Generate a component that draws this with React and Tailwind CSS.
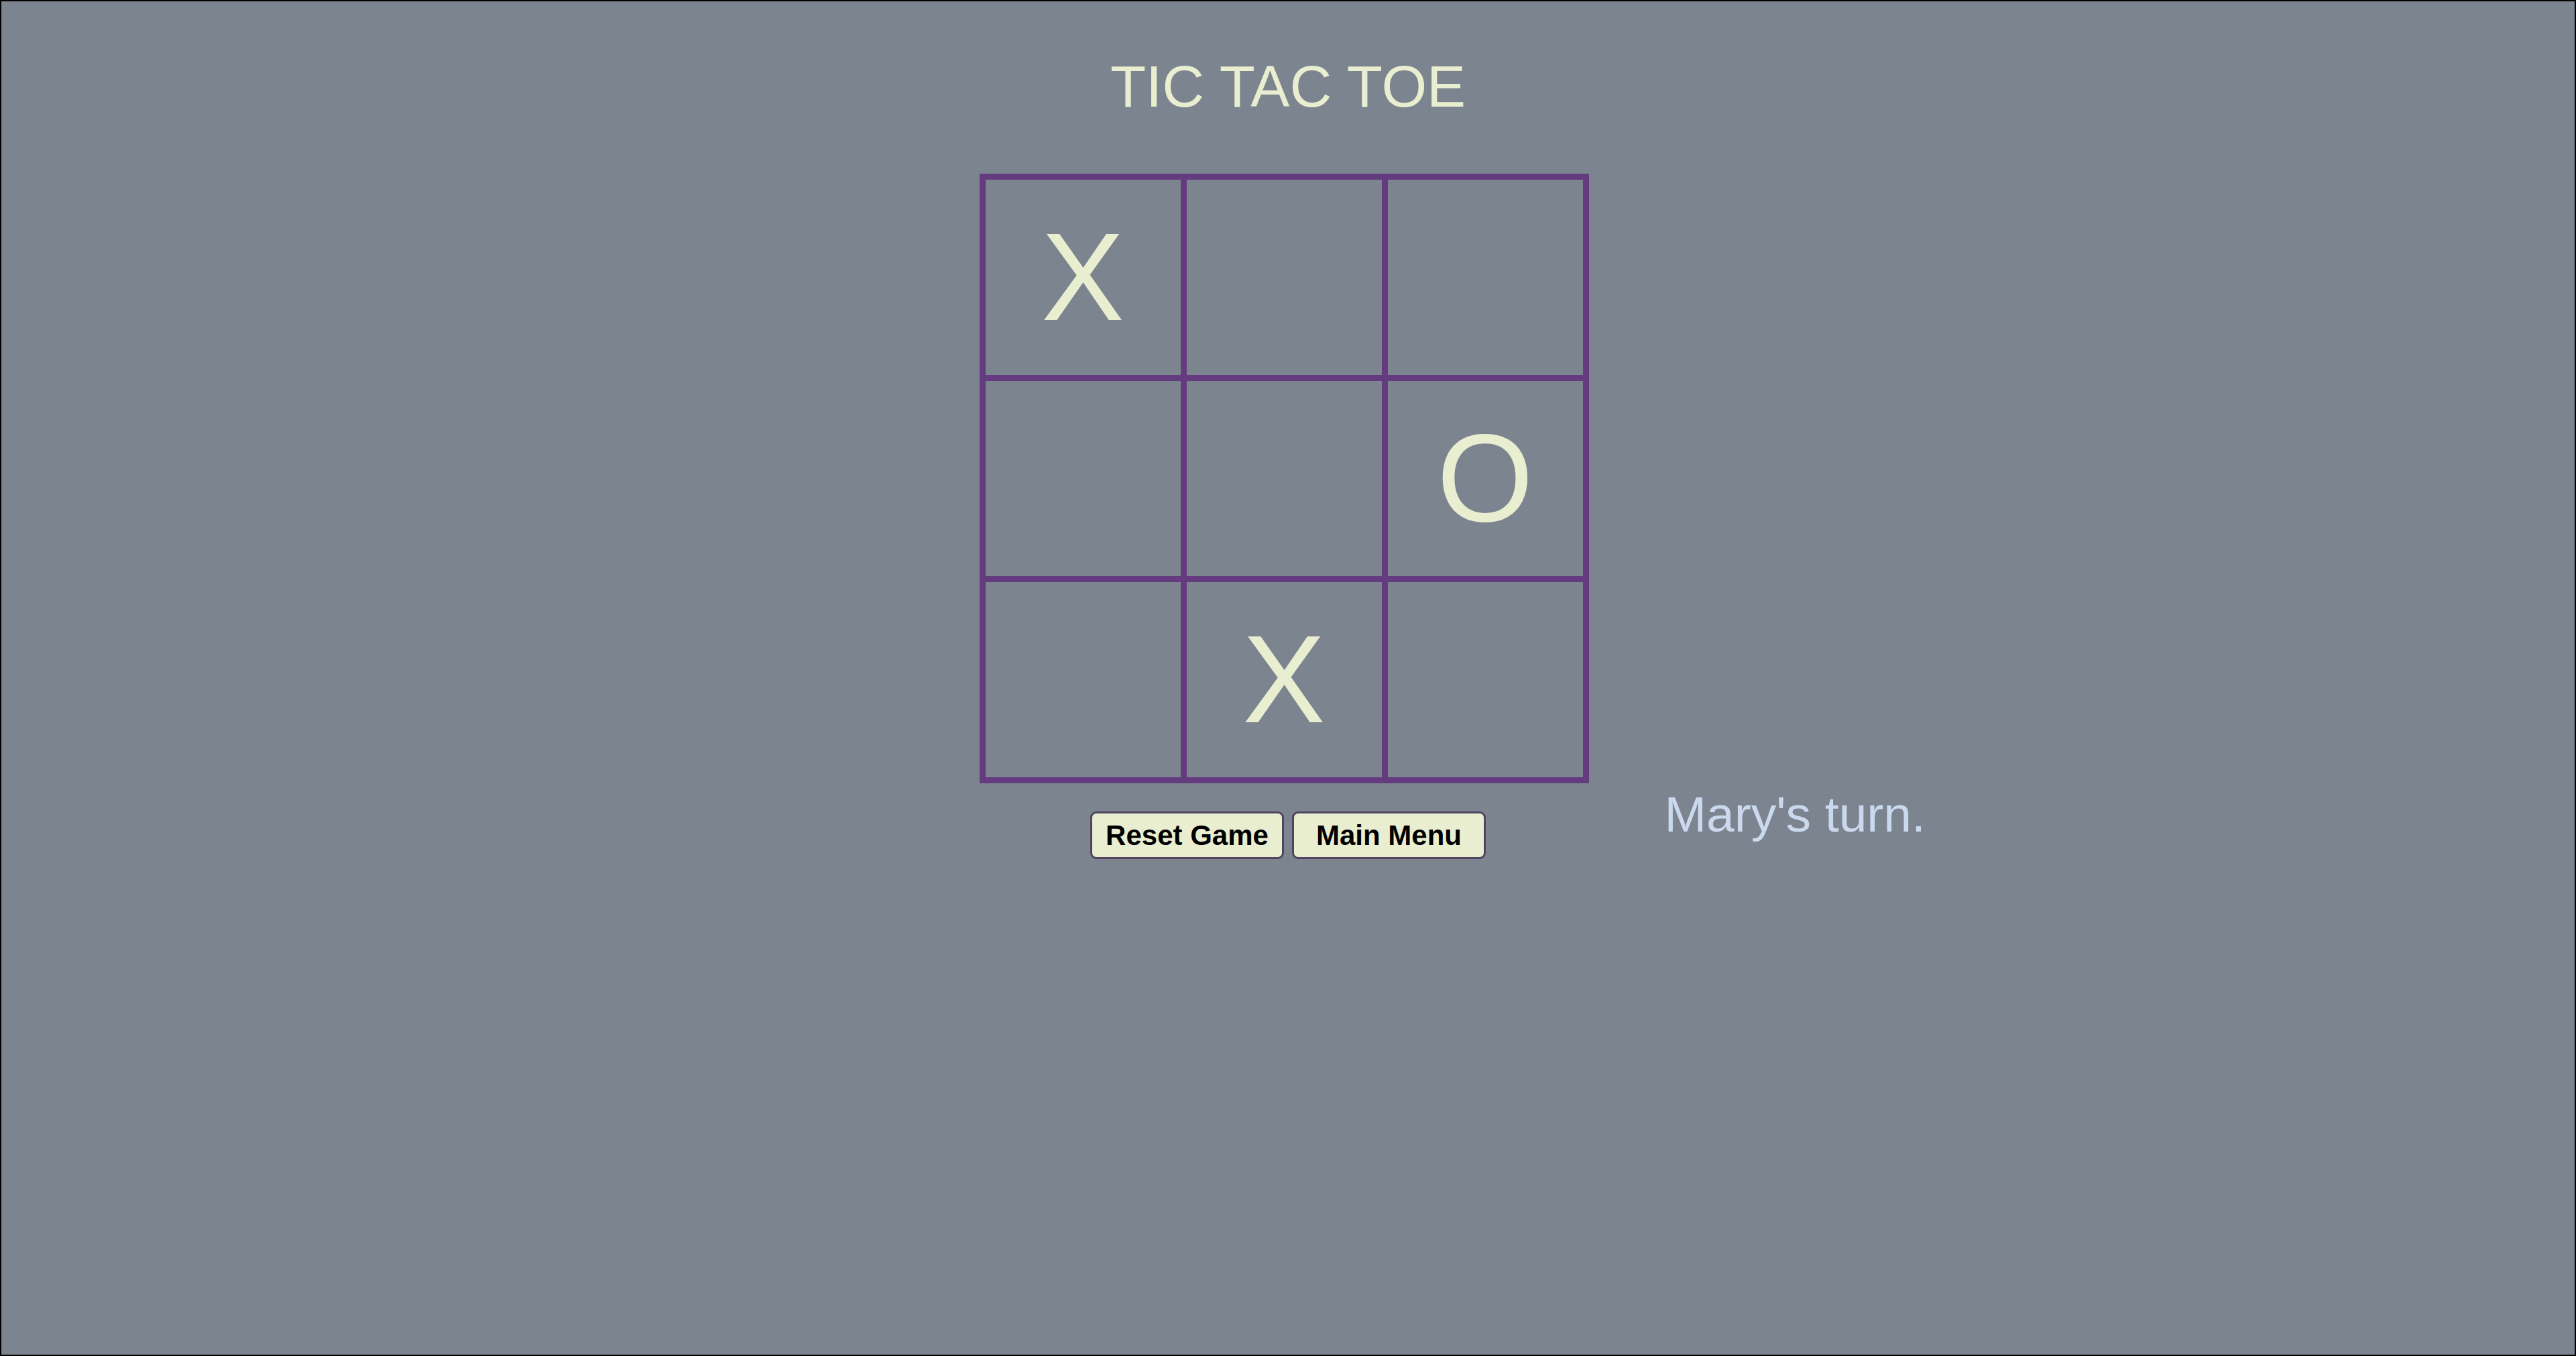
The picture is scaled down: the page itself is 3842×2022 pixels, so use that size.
const board = ["X", "", "", "", "", "O", "", "X", ""];

function Cell({ mark }) {
  return (
    <div className="w-[291px] h-[291px] bg-[#7b848f] flex items-center justify-center text-[185px] leading-none text-[#eaeed0]">
      {mark}
    </div>
  );
}

export default function App() {
  return (
    <div
      className="h-screen w-full border-2 border-black bg-[#7b848f] flex flex-col items-center"
      style={{ fontFamily: '"Liberation Sans", Arial, sans-serif' }}
    >
      <h1 className="mt-[62px] text-[87px] font-normal text-[#eaeed0]">TIC TAC TOE</h1>

      <div className="mt-[64px] grid grid-cols-[1fr_auto_1fr] w-full">
        <div></div>
        <div className="flex flex-col items-center">
          <div className="mr-[12px] grid grid-cols-3 gap-[9px] p-[9px] bg-[#653b80]">
            {board.map((m, i) => (
              <Cell key={i} mark={m} />
            ))}
          </div>
          <div className="mt-[42px] flex gap-[12px]">
            <button className="w-[289px] h-[71px] rounded-[9px] border-[3px] border-[#4f4560] bg-[#eaeed0] text-[42px] font-bold text-black">
              Reset Game
            </button>
            <button className="w-[289px] h-[71px] rounded-[9px] border-[3px] border-[#4f4560] bg-[#eaeed0] text-[42px] font-bold text-black">
              Main Menu
            </button>
          </div>
        </div>
        <div className="self-end pl-[101px] mb-[10px]">
          <p className="text-[75px] text-[#cbd9ee]">Mary's turn.</p>
        </div>
      </div>
    </div>
  );
}
